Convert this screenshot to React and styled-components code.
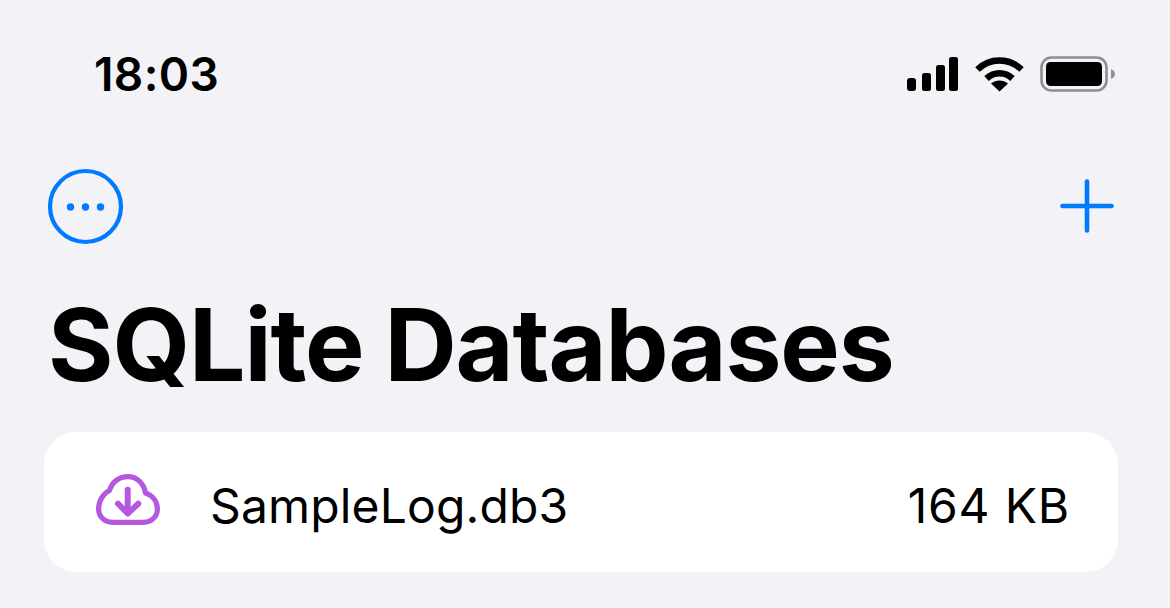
import React from "react"
import styled, { createGlobalStyle } from "styled-components"

const GlobalStyle = createGlobalStyle`
  html, body {
    margin: 0;
    padding: 0;
    background: #f2f2f7;
    font-family: "Inter", "Liberation Sans", sans-serif;
    color: #000;
  }
`

const Screen = styled.div`
  width: 1170px;
  height: 608px;
  overflow: hidden;
  background: #f2f2f7;
  display: flex;
  flex-direction: column;
`

const StatusBar = styled.div`
  height: 148px;
  box-sizing: border-box;
  padding: 48px 54px 0 94px;
  display: flex;
  justify-content: space-between;
  align-items: flex-start;
`

const Time = styled.span`
  font-size: 46px;
  line-height: 52px;
  font-weight: 600;
  letter-spacing: 0.4px;
`

const StatusIcons = styled.div`
  display: flex;
  align-items: center;
  gap: 16px;
  padding-top: 8px;
`

const NavBar = styled.div`
  height: 116px;
  box-sizing: border-box;
  padding: 20px 56px 0 47px;
  display: flex;
  justify-content: space-between;
  align-items: flex-start;
`

const NavButton = styled.button`
  border: 0;
  padding: 0;
  margin: ${props => props.$top || 0}px 0 0;
  background: none;
  color: #007aff;
  display: block;
  line-height: 0;
`

const Title = styled.h1`
  margin: 0;
  box-sizing: border-box;
  padding: 21px 0 0 48px;
  font-size: 100px;
  line-height: 120px;
  height: 168px;
  font-weight: 700;
  letter-spacing: -1.1px;
  word-spacing: -1.5px;
`

const Card = styled.div`
  margin: 0 52px 0 44px;
  height: 140px;
  box-sizing: border-box;
  padding: 0 48px 0 52px;
  background: #fff;
  border-radius: 32px;
  display: flex;
  align-items: center;
`

const IconSlot = styled.div`
  line-height: 0;
  margin-top: -5px;
`

const FileName = styled.span`
  margin-left: 50px;
  padding-top: 8px;
  flex: 1;
  font-size: 48px;
  line-height: 58px;
  letter-spacing: 0.15px;
`

const FileSize = styled.span`
  padding-top: 8px;
  font-size: 48px;
  line-height: 58px;
  letter-spacing: 0.8px;
`

const Signal = () => (
  <svg width="52" height="36" viewBox="0 0 52 36" fill="#000">
    <rect x="0" y="22" width="9" height="13" rx="3" />
    <rect x="15" y="17" width="9" height="18" rx="2.5" />
    <rect x="29" y="9" width="9" height="26" rx="2.5" />
    <rect x="42" y="1" width="9" height="34" rx="2.5" />
  </svg>
)

const Wifi = () => (
  <svg width="49" height="36" viewBox="0 0 49 36" fill="none" stroke="#000" strokeWidth="6.5">
    <path d="M2.5 13.5C15 1.5 34 1.5 46.5 13.5" />
    <path d="M11.5 22.5C19 15.5 30 15.5 37.5 22.5" />
    <path d="M24.5 35.5L16 27.5C21 23.5 28 23.5 33 27.5Z" fill="#000" stroke="none" />
  </svg>
)

const Battery = () => (
  <svg width="76" height="36" viewBox="0 0 76 36" fill="none">
    <rect x="1.5" y="1.5" width="65" height="33" rx="10" stroke="#8e8e93" strokeWidth="2.6" />
    <rect x="6" y="6" width="56" height="24" rx="4.5" fill="#000" />
    <path d="M71 13C73.5 14 75 16 75 18C75 20 73.5 22 71 23Z" fill="#8e8e93" />
  </svg>
)

const MoreIcon = () => (
  <svg width="77" height="77" viewBox="0 0 77 77">
    <circle cx="38.5" cy="38.5" r="35.5" fill="none" stroke="currentColor" strokeWidth="4.2" />
    <circle cx="23.5" cy="39" r="3.7" fill="currentColor" />
    <circle cx="38.5" cy="39" r="3.7" fill="currentColor" />
    <circle cx="53.5" cy="39" r="3.7" fill="currentColor" />
  </svg>
)

const PlusIcon = () => (
  <svg width="54" height="54" viewBox="0 0 54 54" stroke="currentColor" strokeWidth="4.6" strokeLinecap="round">
    <path d="M27 2.5V51.5" />
    <path d="M2.5 27H51.5" />
  </svg>
)

const CloudIcon = () => (
  <svg width="64" height="51" viewBox="0 0 64 51" fill="none" stroke="#b558e0" strokeWidth="5.2" strokeLinecap="round" strokeLinejoin="round">
    <path d="M16.5 48.4H47.5C55 48.4 61.4 43 61.4 35C61.4 27.5 56.5 21.5 49.5 19C48 9 40.5 2.6 32 2.6C23 2.6 16 8 13.5 16.5C7 19.5 2.6 27 2.6 35C2.6 43 9 48.4 16.5 48.4Z" />
    <path d="M31.7 15.7V39" strokeWidth="6" />
    <path d="M22 29.7L31.7 39.5L42.3 29.7" strokeWidth="6" />
  </svg>
)

export default function App() {
  return (
    <Screen>
      <GlobalStyle />
      <StatusBar>
        <Time>18:03</Time>
        <StatusIcons>
          <Signal />
          <Wifi />
          <Battery />
        </StatusIcons>
      </StatusBar>
      <NavBar>
        <NavButton aria-label="More">
          <MoreIcon />
        </NavButton>
        <NavButton aria-label="Add" $top={11}>
          <PlusIcon />
        </NavButton>
      </NavBar>
      <Title>SQLite Databases</Title>
      <Card>
        <IconSlot>
          <CloudIcon />
        </IconSlot>
        <FileName>SampleLog.db3</FileName>
        <FileSize>164 KB</FileSize>
      </Card>
    </Screen>
  )
}
